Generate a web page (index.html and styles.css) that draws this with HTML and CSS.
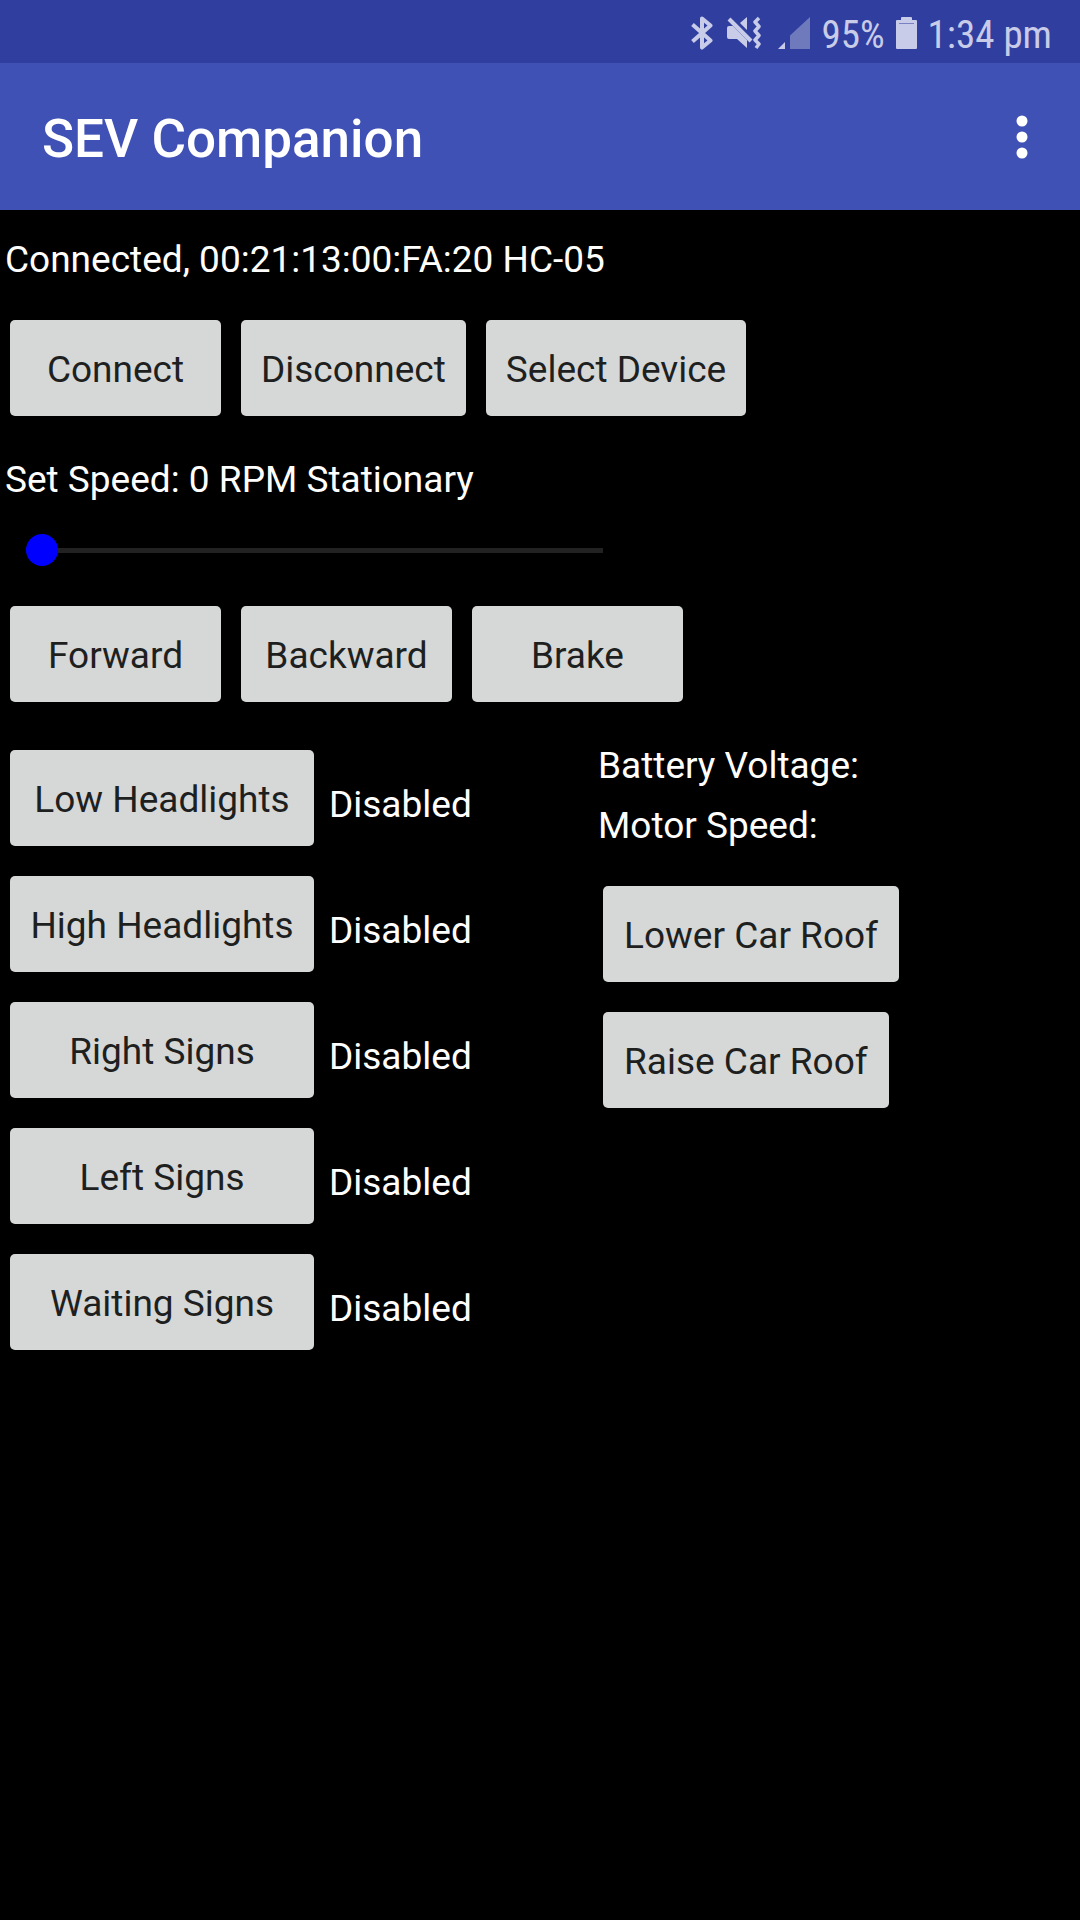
FILE: index.html
```html
<!DOCTYPE html>
<html lang="en">
<head>
<meta charset="utf-8">
<meta name="viewport" content="width=device-width, initial-scale=1">
<title>SEV Companion</title>
<link rel="stylesheet" href="styles.css">
</head>
<body>
<div class="status-bar">
  <svg class="icon-bluetooth" width="22" height="34" viewBox="0 0 22 34" aria-label="Bluetooth"><path d="M1.500 8.500 L19.500 24.500 L11 31.500 V2.500 L19.500 9.500 L1.500 25.500" fill="none" stroke="currentColor" stroke-width="4" stroke-linejoin="round"/></svg>
  <svg class="icon-mute" width="34" height="34" viewBox="0 0 34 34" aria-label="Vibrate"><path d="M0 12 Q0 10 2 10 H6 L20 24 V32 L10 23 H2 Q0 23 0 21Z M13 7 L20 1 V14Z" fill="currentColor"/><path d="M2 3 L24 25" fill="none" stroke="currentColor" stroke-width="4"/><path d="M32 2 L28 6 L32 10.500 L28 15 L32 19.500 L28 24 L32 28 L29 32" fill="none" stroke="currentColor" stroke-width="3.500" stroke-linejoin="round"/></svg>
  <svg class="icon-signal" width="32" height="34" viewBox="0 0 32 34" aria-label="Signal"><path d="M0 33 L7 26 V33Z" fill="currentColor"/><path d="M12 33 V19.500 L32 1 V33Z" fill="currentColor" opacity=".42"/></svg>
  <span class="battery-level">95%</span>
  <svg class="icon-battery" width="21" height="34" viewBox="0 0 21 34" aria-label="Battery"><path d="M0 5 Q0 4 1 4 H5 V2 Q5 1 6 1 H15 Q16 1 16 2 V4 H20 Q21 4 21 5 V32 Q21 33 20 33 H1 Q0 33 0 32Z" fill="currentColor"/><path d="M3 7.500 H18" stroke="#7981c3" stroke-width="1"/></svg>
  <span class="clock">1:34 pm</span>
</div>
<header class="app-bar">
  <h1 class="app-title">SEV Companion</h1>
  <button class="menu-button" type="button" aria-label="More options">
    <svg width="12" height="44" viewBox="0 0 12 44"><g fill="currentColor"><circle cx="6" cy="6" r="5.500"/><circle cx="6" cy="22" r="5.500"/><circle cx="6" cy="38" r="5.500"/></g></svg>
  </button>
</header>
<main class="content">
  <section class="connection">
    <p class="label">Connected, 00:21:13:00:FA:20 HC-05</p>
    <div class="button-row">
      <button class="button" type="button">Connect</button>
      <button class="button" type="button">Disconnect</button>
      <button class="button" type="button">Select Device</button>
    </div>
  </section>
  <section class="speed">
    <label class="label" for="speed">Set Speed: 0 RPM Stationary</label>
    <input class="slider" id="speed" type="range" min="0" max="100" value="0">
    <div class="button-row">
      <button class="button" type="button">Forward</button>
      <button class="button" type="button">Backward</button>
      <button class="button" type="button">Brake</button>
    </div>
  </section>
  <div class="panels">
    <section class="lights">
      <div class="light"><button class="button" type="button">Low Headlights</button><span class="state">Disabled</span></div>
      <div class="light"><button class="button" type="button">High Headlights</button><span class="state">Disabled</span></div>
      <div class="light"><button class="button" type="button">Right Signs</button><span class="state">Disabled</span></div>
      <div class="light"><button class="button" type="button">Left Signs</button><span class="state">Disabled</span></div>
      <div class="light"><button class="button" type="button">Waiting Signs</button><span class="state">Disabled</span></div>
    </section>
    <section class="readings">
      <p class="reading">Battery Voltage:</p>
      <p class="reading">Motor Speed:</p>
      <div class="roof">
        <button class="button" type="button">Lower Car Roof</button>
        <button class="button" type="button">Raise Car Roof</button>
      </div>
    </section>
  </div>
</main>
</body>
</html>
```
FILE: styles.css
```css
* {
  box-sizing: border-box;
}

body {
  margin: 0;
  min-height: 100vh;
  background: #000;
  color: #fff;
  font: 37px/60px Roboto, sans-serif;
}

p,
h1 {
  margin: 0;
}

button {
  border: 0;
  font: inherit;
  cursor: pointer;
}

.status-bar {
  display: flex;
  align-items: center;
  justify-content: flex-end;
  height: 63px;
  padding: 2px 28px 0 0;
  background: #303f9f;
  color: #c9cce8;
  font-family: "Roboto Condensed", "Liberation Sans Narrow", Roboto, sans-serif;
  font-size: 39px;
}

.icon-mute {
  margin-left: 14px;
}

.icon-signal {
  margin-left: 17px;
}

.battery-level,
.icon-battery,
.clock {
  margin-left: 11px;
}

.battery-level,
.clock {
  padding-top: 4px;
}

.app-bar {
  display: flex;
  align-items: center;
  justify-content: space-between;
  height: 147px;
  padding: 0 32px 0 42px;
  background: #3f51b5;
}

.app-title {
  padding-top: 4px;
  font-size: 53px;
  font-weight: 500;
}

.menu-button {
  display: flex;
  padding: 20px;
  background: none;
  color: #fff;
}

.content {
  display: flex;
  flex-direction: column;
  gap: 34px;
  padding-top: 20px;
}

.connection,
.speed {
  display: flex;
  flex-direction: column;
}

.connection {
  gap: 30px;
}

.label {
  padding-left: 5px;
}

.button-row {
  display: flex;
  flex-wrap: wrap;
  gap: 20px;
  padding-left: 10px;
}

.button {
  min-width: 211px;
  height: 96px;
  padding: 3px 20px 0;
  border-radius: 5px;
  background: #d6d8d7;
  color: #1e1f1f;
  white-space: nowrap;
}

.slider {
  appearance: none;
  width: 577px;
  max-width: 90%;
  height: 32px;
  margin: 24px 0 40px 26px;
  background: linear-gradient(#222, #222) center / 100% 5px no-repeat;
}

.slider::-webkit-slider-thumb {
  appearance: none;
  width: 32px;
  height: 32px;
  border-radius: 50%;
  background: #00f;
}

.panels {
  display: grid;
  grid-template-columns: 598px 1fr;
}

.lights {
  display: flex;
  flex-direction: column;
  gap: 30px;
  padding: 14px 0 0 10px;
}

.light {
  display: flex;
  align-items: center;
  gap: 15px;
}

.light .button {
  width: 304px;
}

.state {
  padding-top: 14px;
}

.roof {
  display: flex;
  flex-direction: column;
  align-items: flex-start;
  gap: 30px;
  padding: 30px 0 0 5px;
}

.roof .button {
  padding-inline: 21px;
}
```
